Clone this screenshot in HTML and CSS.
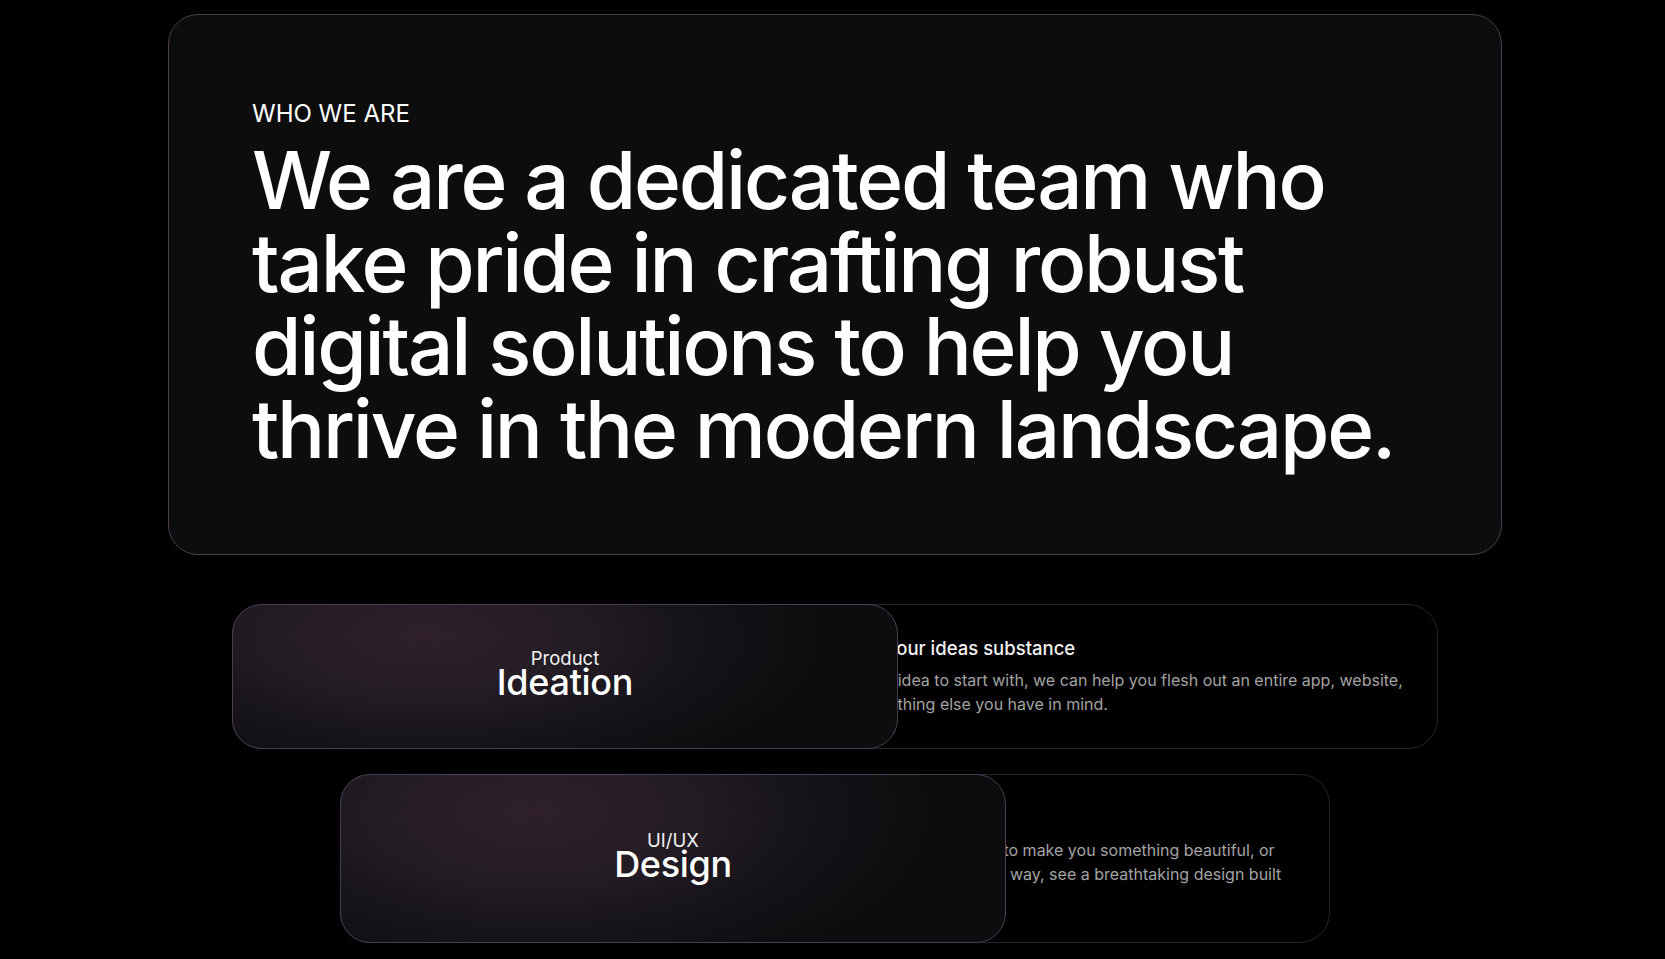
FILE: index.html
```html
<!DOCTYPE html>
<html lang="en">
<head>
<meta charset="utf-8">
<title>Who we are</title>
<link rel="stylesheet" href="styles.css">
</head>
<body>
<main class="page">
  <section class="intro">
    <p class="eyebrow">WHO WE ARE</p>
    <h1 class="headline">We are a dedicated team who take pride in crafting robust digital solutions to help you thrive in the modern landscape.</h1>
  </section>

  <section class="services">
    <article class="service service-wide">
      <div class="service-body">
        <div class="service-spacer"></div>
        <div class="service-text">
          <h3 class="service-title">Get your ideas substance</h3>
          <p class="service-desc">Some idea to start with, we can help you flesh out an entire app, website, or anything else you have in mind.</p>
        </div>
      </div>
      <div class="service-cover">
        <span class="cover-kicker">Product</span>
        <span class="cover-title">Ideation</span>
      </div>
    </article>

    <article class="service service-narrow">
      <div class="service-body">
        <div class="service-spacer"></div>
        <div class="service-text">
          <h3 class="service-title">Beautiful UI</h3>
          <p class="service-desc">We'll work with you to make you something beautiful, or relax, and, along the way, see a breathtaking design built for you.</p>
        </div>
      </div>
      <div class="service-cover">
        <span class="cover-kicker">UI/UX</span>
        <span class="cover-title">Design</span>
      </div>
    </article>
  </section>
</main>
</body>
</html>
```

FILE: styles.css
```css
* { box-sizing: border-box; }

html, body {
  margin: 0;
  padding: 0;
  background: #000;
}

body {
  font-family: "Inter", "Noto Sans", "Liberation Sans", sans-serif;
  color: #fff;
  padding-left: 5px;
  overflow: hidden;
}

.page {
  width: 1334px;
  margin: 14px auto 0;
}

.intro {
  background: #0d0d0d;
  border: 1px solid #4d3d52;
  border-radius: 30px;
  height: 541px;
  padding: 83px 40px 0 83px;
}

.eyebrow {
  margin: 0;
  font-size: 24px;
  line-height: 32px;
  font-weight: 400;
  color: #fff;
}

.headline {
  margin: 8px 0 0;
  font-size: 80px;
  line-height: 83px;
  font-weight: 500;
  letter-spacing: -2.2px;
  color: #fff;
  max-width: 1180px;
}

.services {
  margin-top: 49px;
  display: flex;
  flex-direction: column;
  align-items: center;
  gap: 25px;
}

.service {
  position: relative;
  border: 1px solid #2a2130;
  border-radius: 30px;
  background: #000;
}

.service-wide { width: 1206px; }
.service-narrow { width: 990px; }

.service-body {
  display: grid;
  padding: 30.5px 34px 32.5px 40px;
}

.service-wide .service-body {
  grid-template-columns: 1fr 557px;
  padding-right: 30px;
}

.service-narrow .service-body {
  grid-template-columns: 1fr 443px;
  padding-right: 34px;
}

.service-title {
  margin: 0 0 8px;
  font-size: 18.5px;
  line-height: 24px;
  font-weight: 500;
  color: #f2f2f2;
}

.service-desc {
  margin: 0;
  font-size: 16px;
  line-height: 24px;
  color: #a3a3a3;
}

.service-cover {
  position: absolute;
  left: -1px;
  top: -1px;
  bottom: -1px;
  width: 666px;
  border: 1px solid #4d3d54;
  border-radius: 30px;
  background:
    radial-gradient(ellipse 60% 110% at 29% 22%, #2f202b 0%, #251d25 35%, #17141a 65%, #0d0c0e 100%);
  display: flex;
  flex-direction: column;
  align-items: center;
  justify-content: center;
  padding-bottom: 9px;
}

.cover-kicker {
  font-size: 18.5px;
  line-height: 20px;
  font-weight: 400;
  color: #f2f2f2;
}

.cover-title {
  font-size: 36px;
  line-height: 28px;
  font-weight: 500;
  color: #fff;
  letter-spacing: -0.3px;
}
```
